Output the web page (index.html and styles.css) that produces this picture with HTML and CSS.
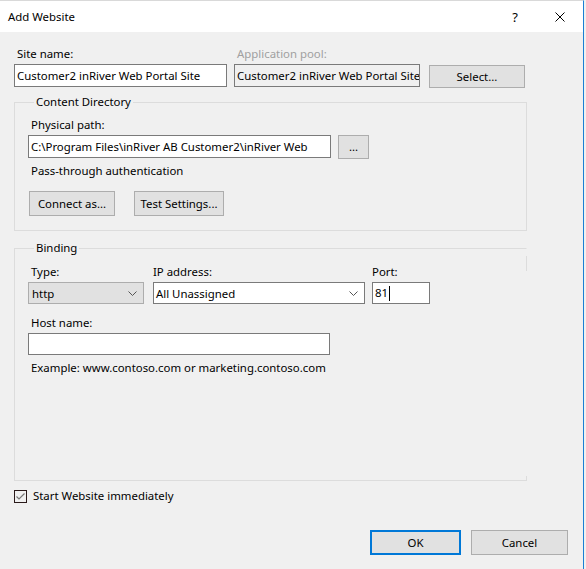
FILE: index.html
```html
<!DOCTYPE html>
<html>
<head>
<meta charset="utf-8">
<link rel="stylesheet" href="styles.css">
</head>
<body>
<div class="window">
  <div class="titlebar">
    <span class="title">Add Website</span>
    <div class="title-actions">
      <span class="help">?</span>
      <span class="close"><svg width="10" height="10" viewBox="0 0 10 10"><path d="M0.5 0.5 L9.5 9.5 M9.5 0.5 L0.5 9.5" stroke="#000" stroke-width="1" fill="none"/></svg></span>
    </div>
  </div>
  <div class="content">
    <div class="top-row">
      <div class="field">
        <div class="lbl">Site name:</div>
        <div class="tb w-site">Customer2 inRiver Web Portal Site</div>
      </div>
      <div class="field">
        <div class="lbl disabled">Application pool:</div>
        <div class="tb ro w-pool">Customer2 inRiver Web Portal Site</div>
      </div>
      <button class="btn btn-select">Select...</button>
    </div>

    <fieldset class="group content-dir">
      <legend>Content Directory</legend>
      <div class="lbl">Physical path:</div>
      <div class="path-row">
        <div class="tb w-path">C:\Program Files\inRiver AB Customer2\inRiver Web</div>
        <button class="btn btn-browse">...</button>
      </div>
      <div class="text auth">Pass-through authentication</div>
      <div class="btn-row">
        <button class="btn btn-connect">Connect as...</button>
        <button class="btn btn-test">Test Settings...</button>
      </div>
    </fieldset>

    <fieldset class="group binding">
      <legend>Binding</legend>
      <div class="bind-row">
        <div class="field">
          <div class="lbl">Type:</div>
          <div class="combo combo-type"><span>http</span><svg width="9" height="5" viewBox="0 0 9 5"><path d="M0.5 0.5 L4.5 4.5 L8.5 0.5" stroke="#555" stroke-width="1" fill="none"/></svg></div>
        </div>
        <div class="field">
          <div class="lbl lbl-ip">IP address:</div>
          <div class="combo combo-ip"><span>All Unassigned</span><svg width="9" height="5" viewBox="0 0 9 5"><path d="M0.5 0.5 L4.5 4.5 L8.5 0.5" stroke="#555" stroke-width="1" fill="none"/></svg></div>
        </div>
        <div class="field">
          <div class="lbl lbl-port">Port:</div>
          <div class="tb small w-port">81<span class="caret"></span></div>
        </div>
      </div>
      <div class="lbl host-lbl">Host name:</div>
      <div class="tb small w-host"></div>
      <div class="text example">Example: www.contoso.com or marketing.contoso.com</div>
    </fieldset>

    <div class="check-row">
      <span class="checkbox"><svg width="11" height="11" viewBox="0 0 11 11"><path d="M1.5 5.5 L4 8 L9.5 2.5" stroke="#777" stroke-width="1.2" fill="none"/></svg></span>
      <span class="text">Start Website immediately</span>
    </div>

    <div class="footer">
      <button class="btn btn-ok">OK</button>
      <button class="btn btn-cancel">Cancel</button>
    </div>
  </div>
</div>
</body>
</html>
```

FILE: styles.css
```css
* { box-sizing: border-box; }

html, body {
  margin: 0;
  padding: 0;
  background: #f0f0f0;
}

body {
  font-family: "Noto Sans", "Liberation Sans", sans-serif;
  font-size: 11.4px;
  color: #000;
}

.window {
  width: 584px;
  height: 569px;
  background: #f0f0f0;
  border-right: 1px solid #1a7fd4;
  border-top: 1px solid #d9d9d9;
  overflow: hidden;
}

.titlebar {
  height: 31px;
  background: #fff;
  display: flex;
  align-items: center;
  justify-content: space-between;
  padding-left: 8px;
}

.title {
  line-height: 16px;
}

.title-actions {
  display: flex;
  align-items: center;
}

.help {
  width: 46px;
  text-align: center;
  font-size: 13px;
  line-height: 16px;
  padding-left: 2px;
}

.close {
  width: 46px;
  height: 30px;
  display: flex;
  align-items: center;
  justify-content: center;
}

.content {
  padding: 14px 0 0 14px;
}

.lbl, .text {
  line-height: 16px;
  height: 16px;
  white-space: nowrap;
}

.lbl {
  padding-left: 3px;
  margin-bottom: 2px;
}

.disabled { color: #a0a0a0; }

.top-row {
  display: flex;
  align-items: flex-start;
}

.field { display: flex; flex-direction: column; }

.tb {
  height: 23px;
  background: #fff;
  border: 1px solid #7a7a7a;
  padding-left: 2px;
  line-height: 21px;
  white-space: nowrap;
  overflow: hidden;
}

.tb.small { height: 22px; line-height: 20px; }

.tb.ro { background: #f0f0f0; }

.w-site { width: 213px; }
.w-pool { width: 186px; margin-left: 7px; }
.top-row .field + .field .lbl { margin-left: 7px; }

.btn {
  font-family: inherit;
  font-size: 11.4px;
  color: #000;
  background: #e1e1e1;
  border: 1px solid #adadad;
  padding: 0;
  height: 25px;
  line-height: 21px;
  border-radius: 0;
}

.btn-select {
  width: 96px;
  height: 23px;
  margin-left: 9px;
  margin-top: 19px;
}

.group {
  margin: 0;
  border: 1px solid #dcdcdc;
  width: 513px;
  padding: 7px 0 0 13px;
  min-width: 0;
}

.group legend {
  padding: 0 2px;
  margin-left: 6px;
  line-height: 16px;
}

.content-dir {
  margin-top: 6px;
  height: 137px;
}

.path-row {
  display: flex;
  align-items: flex-start;
}

.w-path { width: 303px; }

.btn-browse {
  width: 31px;
  height: 24px;
  margin-left: 7px;
  line-height: 18px;
}

.auth {
  margin-top: 4px;
  padding-left: 3px;
}

.btn-row {
  display: flex;
  margin-top: 12px;
  padding-left: 1px;
}

.btn-connect { width: 86px; }
.btn-test { width: 90px; margin-left: 19px; }

.binding {
  margin-top: 9px;
  height: 241px;
  padding-top: 8px;
  position: relative;
  border-right-color: transparent;
}

.binding::before,
.binding::after {
  content: "";
  position: absolute;
  right: -1px;
  width: 1px;
  background: #dcdcdc;
}

.binding::before { top: 0; height: 15px; }
.binding::after { bottom: -1px; height: 5px; }

.bind-row {
  display: flex;
  align-items: flex-start;
}

.combo {
  height: 22px;
  display: flex;
  align-items: center;
  justify-content: space-between;
  padding: 0 6px 0 3px;
  white-space: nowrap;
}

.combo-type {
  width: 116px;
  background: #e1e1e1;
  border: 1px solid #adadad;
}

.combo-ip {
  width: 212px;
  background: #fff;
  border: 1px solid #7a7a7a;
  padding-left: 2px;
}

.bind-row .field:nth-child(2) { margin-left: 9px; }
.bind-row .field:nth-child(3) { margin-left: 7px; }

.lbl-ip, .lbl-port { padding-left: 0; }

.w-port {
  width: 58px;
  display: flex;
  align-items: center;
}

.caret {
  display: inline-block;
  width: 1px;
  height: 15px;
  background: #000;
  margin-left: 1px;
}

.host-lbl { margin-top: 11px; }

.w-host { width: 302px; }

.example {
  margin-top: 5px;
  padding-left: 3px;
}

.check-row {
  display: flex;
  align-items: center;
  margin-top: 7px;
  height: 16px;
}

.checkbox {
  width: 13px;
  height: 13px;
  border: 1px solid #2a1a1a;
  background: #f0f0f0;
  display: flex;
  align-items: center;
  justify-content: center;
  margin-right: 6px;
}

.footer {
  display: flex;
  justify-content: flex-end;
  margin-top: 26px;
  padding-right: 15px;
}

.btn-ok {
  width: 91px;
  border: 2px solid #0078d7;
}

.btn-cancel {
  width: 97px;
  margin-left: 10px;
}
```
